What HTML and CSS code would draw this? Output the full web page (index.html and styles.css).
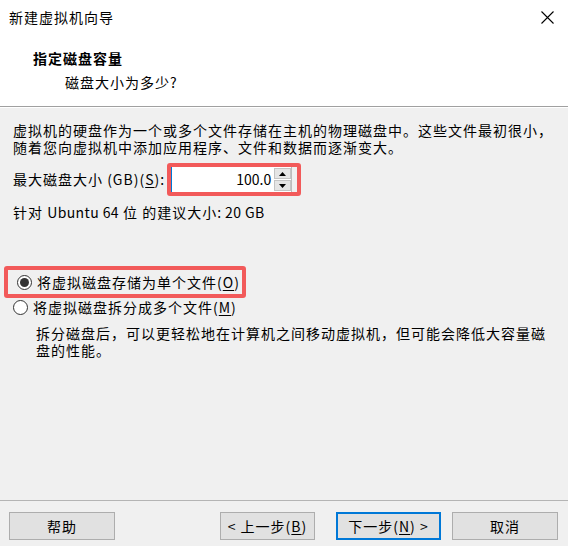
FILE: index.html
```html
<!DOCTYPE html>
<html lang="zh-CN">
<head>
    <meta charset="UTF-8">
    <meta name="viewport" content="width=device-width, initial-scale=1.0">
    <title>新建虚拟机向导</title>
    <link rel="stylesheet" href="styles.css">
</head>
<body>
    <div class="wizard">
        <div class="header">
            <div class="titlebar">
                <span class="title">新建虚拟机向导</span>
                <svg class="close" width="13" height="13" viewBox="0 0 13 13">
                    <path d="M0.5 0.5 L12.5 12.5 M12.5 0.5 L0.5 12.5" stroke="#000" stroke-width="1.1" fill="none"/>
                </svg>
            </div>
            <div class="heading">指定磁盘容量</div>
            <div class="subheading">磁盘大小为多少?</div>
        </div>

        <div class="content">
            <p class="intro">虚拟机的硬盘作为一个或多个文件存储在主机的物理磁盘中。这些文件最初很小，<br>随着您向虚拟机中添加应用程序、文件和数据而逐渐变大。</p>

            <div class="size-row">
                <span class="size-label">最大磁盘大小 (GB)(<u>S</u>):</span>
                <div class="mark spin-mark">
                    <div class="spinner">
                        <span class="spin-value">100.0</span>
                        <div class="spin-buttons">
                            <span class="spin-btn">
                                <svg width="7" height="4" viewBox="0 0 7 4"><path d="M3.5 0 L7 4 L0 4 Z" fill="#000"/></svg>
                            </span>
                            <span class="spin-btn">
                                <svg width="7" height="4" viewBox="0 0 7 4"><path d="M0 0 L7 0 L3.5 4 Z" fill="#000"/></svg>
                            </span>
                        </div>
                        <span class="spin-edge"></span>
                    </div>
                </div>
            </div>

            <p class="hint">针对 <span class="latin">Ubuntu 64</span> 位 的建议大小<span class="latin">: 20 GB</span></p>

            <div class="options">
                <div class="mark radio-mark">
                    <label class="radio checked"><span class="dot"></span>将虚拟磁盘存储为单个文件(<u>O</u>)</label>
                </div>
                <label class="radio plain"><span class="dot"></span>将虚拟磁盘拆分成多个文件(<u>M</u>)</label>
                <p class="radio-desc">拆分磁盘后，可以更轻松地在计算机之间移动虚拟机，但可能会降低大容量磁<br>盘的性能。</p>
            </div>
        </div>

        <div class="footer">
            <button class="btn">帮助</button>
            <div class="nav">
                <button class="btn back">&lt; 上一步(<u>B</u>)</button>
                <button class="btn primary">下一步(<u>N</u>) &gt;</button>
                <button class="btn cancel">取消</button>
            </div>
        </div>
    </div>
</body>
</html>
```

FILE: styles.css
```css
* {
    box-sizing: border-box;
    font-family: "Noto Sans CJK SC", "Noto Sans", sans-serif;
}

body {
    margin: 0;
    background: #f0f0f0;
    color: #000;
    font-size: 14px;
}

u {
    text-decoration: underline;
    text-underline-offset: 2px;
}

.wizard {
    height: 546px;
    display: flex;
    flex-direction: column;
    background: #f0f0f0;
}

/* header */
.header {
    background: #fff;
    height: 107px;
    border-bottom: 1px solid #a0a0a0;
    box-shadow: 0 1px 0 #fff;
}

.titlebar {
    height: 36px;
    display: flex;
    align-items: center;
    justify-content: space-between;
    padding: 0 14px 2px 9px;
}

.title {
    letter-spacing: 1px;
    line-height: 17px;
}

.heading {
    margin: 14px 0 0 33px;
    font-weight: bold;
    letter-spacing: 1px;
    line-height: 17px;
}

.subheading {
    margin: 7px 0 0 65px;
    letter-spacing: 1px;
    line-height: 17px;
}

/* content */
.content {
    padding: 15px 0 0 13px;
    letter-spacing: 1px;
    line-height: 17px;
}

.intro {
    margin: 0;
    white-space: nowrap;
}

.size-row {
    display: flex;
    align-items: center;
    margin-top: 7px;
}

.mark {
    border: 4px solid #f25a5a;
    border-radius: 3px;
}

.spin-mark {
    margin-left: 2px;
    width: 134px;
    height: 33px;
}

.spinner {
    display: flex;
    height: 100%;
}

.spin-value {
    width: 103px;
    background: #fff;
    border-left: 1px solid #0078d7;
    text-align: right;
    padding-right: 3px;
    letter-spacing: 0;
    line-height: 25px;
}

.spin-buttons {
    width: 17px;
    display: flex;
    flex-direction: column;
    padding: 1px 0;
    background: #fff;
}

.spin-btn {
    flex: 1;
    display: flex;
    align-items: center;
    justify-content: center;
    background: #e5e5e5;
    border: 1px solid #c4c4c4;
}

.spin-btn + .spin-btn {
    margin-top: 1px;
}

.spin-edge {
    flex: 1;
    background: #f0f0f0;
    border-left: 1px solid #bcbcbc;
}

.hint {
    margin: 8px 0 0;
}

.latin {
    letter-spacing: 0.4px;
}

/* radio options */
.options {
    margin: 45px 0 0 -13px;
}

.radio-mark {
    margin-left: 4px;
    width: 242px;
    height: 32px;
    display: flex;
    align-items: center;
}

.radio {
    display: flex;
    align-items: center;
    white-space: nowrap;
}

.radio-mark .radio {
    padding-left: 9px;
}

.radio.plain {
    padding-left: 13px;
    height: 19px;
}

.dot {
    width: 15px;
    height: 15px;
    border: 1px solid #333;
    border-radius: 50%;
    background: #fff;
    margin-right: 5px;
    display: flex;
    align-items: center;
    justify-content: center;
}

.checked .dot::after {
    content: "";
    width: 9px;
    height: 9px;
    border-radius: 50%;
    background: #333;
}

.radio-desc {
    margin: 8px 0 0 36px;
    white-space: nowrap;
}

/* footer */
.footer {
    margin-top: auto;
    border-top: 1px solid #b4b4b4;
    padding: 11px 10px 6px 9px;
    display: flex;
    justify-content: space-between;
}

.nav {
    display: flex;
}

.btn {
    width: 106px;
    height: 28px;
    background: #e1e1e1;
    border: 1px solid #adadad;
    font-size: 14px;
    color: #000;
    padding: 0;
    letter-spacing: 1px;
}

.btn.back {
    width: 95px;
}

.btn.primary {
    width: 105px;
    margin-left: 21px;
    border: 2px solid #0078d7;
}

.btn.cancel {
    margin-left: 11px;
}
```
